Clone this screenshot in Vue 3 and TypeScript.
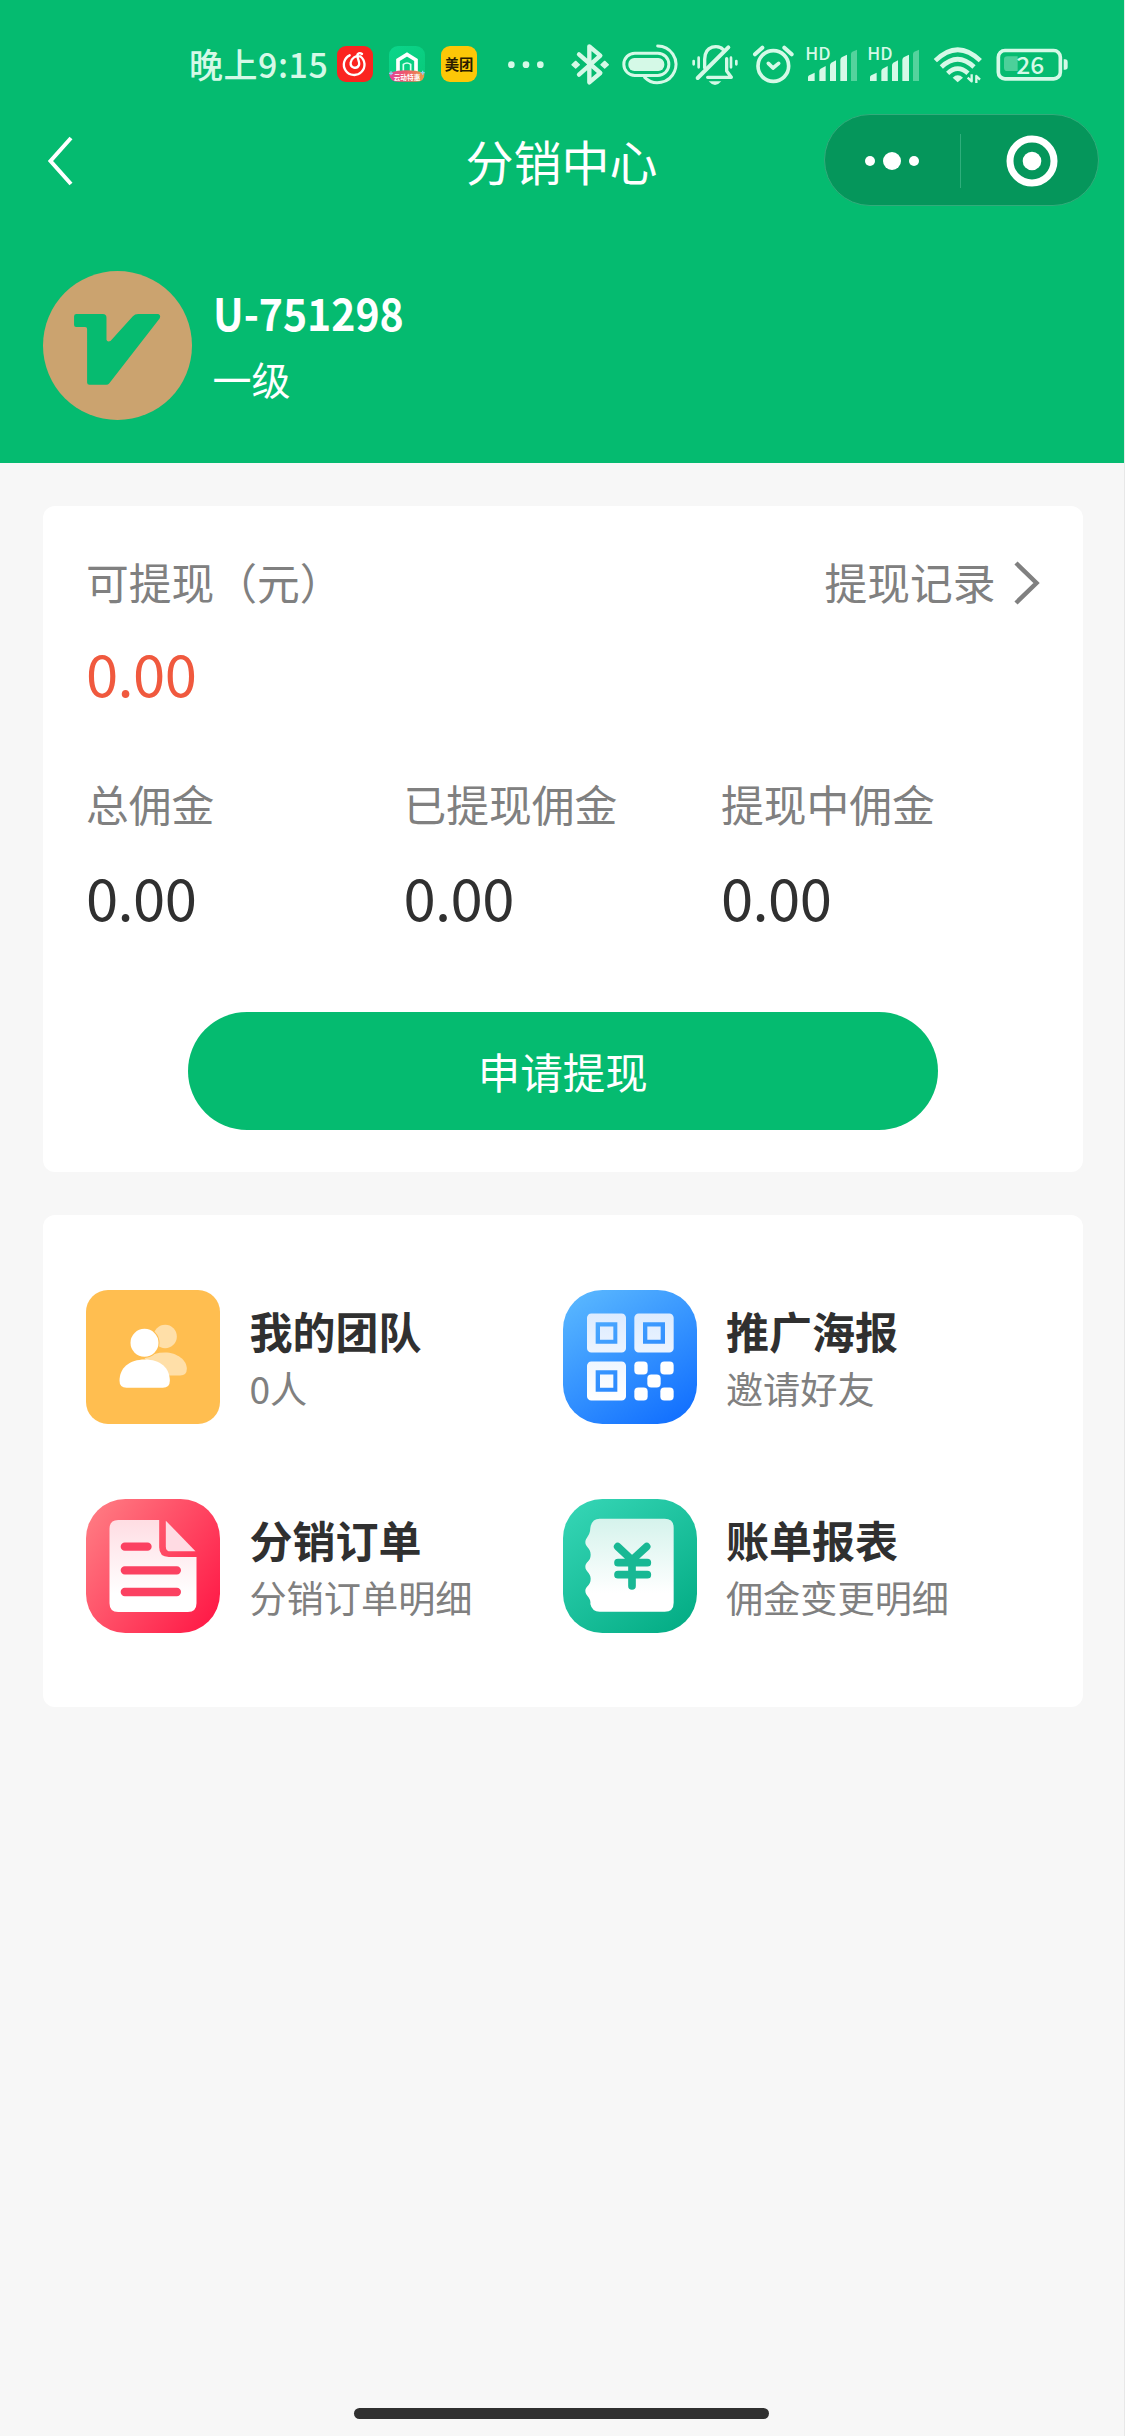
<script setup lang="ts">
interface Stat {
  label: string
  value: string
}
interface Entry {
  icon: 'team' | 'poster' | 'order' | 'bill'
  title: string
  desc: string
}

const stats: Stat[] = [
  { label: '总佣金', value: '0.00' },
  { label: '已提现佣金', value: '0.00' },
  { label: '提现中佣金', value: '0.00' },
]

const entries: Entry[] = [
  { icon: 'team', title: '我的团队', desc: '0人' },
  { icon: 'poster', title: '推广海报', desc: '邀请好友' },
  { icon: 'order', title: '分销订单', desc: '分销订单明细' },
  { icon: 'bill', title: '账单报表', desc: '佣金变更明细' },
]

const signals: string[] = ['sim1', 'sim2']
</script>

<template>
  <div class="page">
    <header class="header">
      <div class="status">
        <span class="clock">晚上9:15</span>
        <svg class="app" viewBox="0 0 108 108">
          <rect width="108" height="108" rx="27" fill="#fb2420" />
          <path d="M38 28A31 31 0 1 0 70 31C56 28 43 36 41 50C39 66 60 71 66 57C69 50 62 38 61 31C60 21 69 19 75 24" fill="none" stroke="#fff" stroke-width="7" stroke-linecap="round" />
        </svg>
        <svg class="app" viewBox="0 0 108 108">
          <defs>
            <linearGradient id="homeBg" x1="0" y1="0" x2="1" y2="1">
              <stop offset="0" stop-color="#0bd68b" />
              <stop offset="1" stop-color="#08c97a" />
            </linearGradient>
            <linearGradient id="ribbon" x1="0" x2="1">
              <stop offset="0" stop-color="#e0439a" />
              <stop offset=".5" stop-color="#ef5a68" />
              <stop offset="1" stop-color="#e6a04a" />
            </linearGradient>
          </defs>
          <rect width="108" height="108" rx="27" fill="url(#homeBg)" />
          <path d="M27 78V42L54 25L81 42V78" fill="none" stroke="#fff" stroke-width="11" />
          <path d="M43 78V55Q54 47 65 55V78" fill="none" stroke="#d9fff0" stroke-width="5" />
          <path d="M0 80Q54 66 106 80Q108 108 80 107H28Q2 108 0 80Z" fill="url(#ribbon)" />
          <path d="M0 82H12M95 80H107M6 76V88M101 74V86" stroke="#8fd0f5" stroke-width="4" />
          <text x="54" y="101" text-anchor="middle" font-size="20" font-weight="700" fill="#fff">云动特惠</text>
        </svg>
        <svg class="app" viewBox="0 0 108 108">
          <rect width="108" height="108" rx="27" fill="#fdc707" />
          <text x="54" y="71" text-anchor="middle" font-size="43" font-weight="700" fill="#2b1d00">美团</text>
        </svg>
        <svg class="dots" viewBox="50 36 114 132">
          <g fill="#d5f9e7"><circle cx="63" cy="104" r="10" /><circle cx="107" cy="104" r="10" /><circle cx="150" cy="104" r="10" /></g>
        </svg>
        <svg class="bt" viewBox="243 36 114 132">
          <path d="M267 73L331 129L298 157V49L331 77L267 134" fill="none" stroke="#d5f9e7" stroke-width="13" stroke-linejoin="round" stroke-linecap="round" />
          <path d="M246 104L257 94L268 104L257 114ZM333 104L344 94L355 104L344 114Z" fill="#d5f9e7" stroke="#d5f9e7" stroke-width="4" stroke-linejoin="round" />
        </svg>
        <svg class="pill" viewBox="396 36 168 132">
          <g fill="none" stroke="#d5f9e7" stroke-width="9" stroke-linecap="round">
            <rect x="401.500" y="69.500" width="135" height="67" rx="33" />
            <path d="M503 48A55 55 0 1 1 464 142" />
          </g>
          <rect x="415" y="84" width="108" height="39" rx="18" fill="#d5f9e7" />
        </svg>
        <svg class="bell" viewBox="603 36 144 132">
          <g fill="none" stroke="#d5f9e7" stroke-width="10" stroke-linecap="round">
            <path d="M644 113V88C644 46 685 42 701 60" />
            <path d="M715 52L623 144" stroke-width="12" />
            <path d="M653 142H724L710 123V86" stroke-linejoin="round" />
            <path d="M611 93V103M626 83V112M723 83V112M739 93V103" stroke-width="8" />
          </g>
          <path d="M656 154H694Q675 176 656 154Z" fill="#d5f9e7" />
        </svg>
        <svg class="alarm" viewBox="787 36 129 132">
          <g fill="none" stroke="#d5f9e7" stroke-width="11" stroke-linecap="round" stroke-linejoin="round">
            <circle cx="851" cy="108" r="46" />
            <path d="M836 100L850 114L867 100" />
            <path d="M796 73L818 53M884 53L906 73" stroke-width="12" />
          </g>
        </svg>
        <svg v-for="s in signals" :key="s" class="signal" viewBox="75 36 162 132">
          <text x="76" y="91" font-size="50" font-weight="500" fill="#d5f9e7" textLength="76" lengthAdjust="spacingAndGlyphs">HD</text>
          <g fill="#d5f9e7">
            <path d="M84 153V142Q84 138 88 136L104 128V153Z" />
            <path d="M118 153V123Q118 119 122 116L137 108V153Z" />
            <path d="M150 153V106Q150 101 154 98L168 91V153Z" />
            <path d="M181 153V90Q181 85 185 82L201 74V153Z" />
            <path d="M213 153V72Q213 67 217 65L231 59V153Z" opacity=".38" />
          </g>
        </svg>
        <svg class="wifi" viewBox="458 36 147 132">
          <g fill="none" stroke="#d5f9e7" stroke-width="14">
            <path d="M465 92Q532 26 600 92" />
            <path d="M483 111Q532 64 581 111" />
            <path d="M502 130Q532 102 563 130" />
          </g>
          <path d="M517 143Q532 129 548 143L532 157Z" fill="#d5f9e7" />
          <path d="M574 133V154L562 143M588 159V138L599 149" fill="none" stroke="#d5f9e7" stroke-width="7" stroke-linejoin="round" />
        </svg>
        <svg class="battery" viewBox="648 36 219 132">
          <rect x="655" y="61.500" width="186" height="85" rx="20" fill="none" stroke="#d5f9e7" stroke-width="11" />
          <path d="M682 79H713V123H682Q672 123 672 113V89Q672 79 682 79Z" fill="#d5f9e7" opacity=".35" />
          <path d="M851 88H855Q863 88 863 96V111Q863 119 855 119H851Z" fill="#d5f9e7" />
          <text x="751" y="131" text-anchor="middle" font-size="70" font-weight="500" fill="#d5f9e7" textLength="84" lengthAdjust="spacingAndGlyphs">26</text>
        </svg>
      </div>

      <nav class="nav">
        <svg class="back" viewBox="0 0 30 52"><path d="M26 3L5.500 26L26 49" fill="none" stroke="#fff" stroke-width="4" /></svg>
        <h1 class="title">分销中心</h1>
        <div class="capsule">
          <svg class="more" viewBox="0 0 56 20"><circle cx="6" cy="10" r="5" fill="#fff" /><circle cx="28" cy="10" r="9" fill="#fff" /><circle cx="50" cy="10" r="5" fill="#fff" /></svg>
          <i class="split"></i>
          <svg class="target" viewBox="0 0 52 52"><circle cx="26" cy="26" r="22" fill="none" stroke="#fff" stroke-width="7" /><circle cx="26" cy="26" r="9.300" fill="#fff" /></svg>
        </div>
      </nav>

      <section class="profile">
        <svg class="avatar" viewBox="129 92.5 446 446">
          <circle cx="352" cy="315.500" r="223" fill="#cba36f" />
          <path d="M229 221H308Q319 221 319 232V298Q321 306 331 302L398 228Q404 221 414 221H474Q483 224 478 235L327 429Q324 433 318 433H268Q261 433 261 426V266Q261 260 255 260H228Q222 260 222 254V228Q222 221 229 221Z" fill="#06bb70" />
        </svg>
        <div class="who">
          <div class="name">U-751298</div>
          <div class="level">一级</div>
        </div>
      </section>
    </header>

    <main class="body">
      <section class="card wallet">
        <div class="row">
          <span class="label">可提现（元）</span>
          <a class="record">
            <span class="label">提现记录</span>
            <svg class="arrow" viewBox="0 0 28 44"><path d="M3 2L23.500 22L3 42" fill="none" stroke="#808080" stroke-width="4.500" /></svg>
          </a>
        </div>
        <div class="amount available">0.00</div>
        <div class="stats">
          <div v-for="s in stats" :key="s.label" class="stat">
            <div class="label">{{ s.label }}</div>
            <div class="amount">{{ s.value }}</div>
          </div>
        </div>
        <button class="apply">申请提现</button>
      </section>

      <section class="card menu">
        <div v-for="e in entries" :key="e.icon" class="entry">
          <svg v-if="e.icon === 'team'" class="icon" viewBox="79.5 89.5 402 402">
            <rect x="79.500" y="89.500" width="402" height="402" rx="66" fill="#ffbe50" />
            <g fill="#ffdfa8">
              <circle cx="317" cy="229" r="35" />
              <path d="M255 294Q285 277 316 277C353 277 382 300 382 326Q382 346 362 346H300Z" />
            </g>
            <circle cx="255" cy="248" r="45" fill="#ffbe50" />
            <circle cx="255" cy="248" r="42" fill="#fff" />
            <path d="M180 362C180 323 210 298 256 298C302 298 331 323 331 362Q331 383 310 383H201Q180 383 180 362Z" fill="#fff" />
          </svg>
          <svg v-else-if="e.icon === 'poster'" class="icon" viewBox="69 89.5 402 402">
            <defs>
              <linearGradient id="blue" x1=".1" y1="0" x2=".75" y2="1">
                <stop offset="0" stop-color="#5ab8ff" />
                <stop offset="1" stop-color="#1472ff" />
              </linearGradient>
              <linearGradient id="blueInk" gradientUnits="userSpaceOnUse" x1="0" y1="160" x2="0" y2="420">
                <stop offset="0" stop-color="#dcebff" />
                <stop offset="1" stop-color="#fff" />
              </linearGradient>
            </defs>
            <rect x="69" y="89.500" width="402" height="402" rx="118" fill="url(#blue)" />
            <g fill="none" stroke="url(#blueInk)" stroke-width="26" stroke-linejoin="round">
              <path d="M154 173H245V264H154ZM296 173H388V264H296ZM154 317H245V408H154Z" />
            </g>
            <path d="M180 199H220V239H180ZM322 199H362V239H322ZM180 343H220V383H180Z" fill="url(#blueInk)" />
            <g fill="#fff">
              <rect x="283" y="304" width="40" height="39" rx="12" /><rect x="361" y="304" width="40" height="39" rx="12" />
              <rect x="322" y="343" width="40" height="39" rx="12" />
              <rect x="283" y="382" width="40" height="39" rx="12" /><rect x="361" y="382" width="40" height="39" rx="12" />
            </g>
          </svg>
          <svg v-else-if="e.icon === 'order'" class="icon" viewBox="79.5 717 402 402">
            <defs>
              <linearGradient id="red" x1="0" y1=".1" x2="1" y2=".8">
                <stop offset="0" stop-color="#ff7c83" />
                <stop offset="1" stop-color="#ff1c48" />
              </linearGradient>
              <linearGradient id="redInk" x1="0" y1="0" x2="0" y2="1">
                <stop offset="0" stop-color="#ffdde3" />
                <stop offset=".8" stop-color="#fff" />
              </linearGradient>
            </defs>
            <rect x="79.500" y="717" width="402" height="402" rx="118" fill="url(#red)" />
            <path d="M176 780H299V862Q299 891 328 891H411V1030Q411 1056 385 1056H176Q150 1056 150 1030V806Q150 780 176 780Z" fill="url(#redInk)" />
            <path d="M319 782L408 874H333Q319 874 319 860Z" fill="#ffdbe3" />
            <path d="M196 860H264M196 931H352M196 996H352" stroke="#fb4161" stroke-width="25" stroke-linecap="round" />
          </svg>
          <svg v-else class="icon" viewBox="69 717 402 402">
            <defs>
              <linearGradient id="teal" x1=".1" y1="0" x2=".85" y2="1">
                <stop offset="0" stop-color="#35d5b5" />
                <stop offset="1" stop-color="#04ad85" />
              </linearGradient>
              <linearGradient id="tealInk" x1="0" y1="0" x2="0" y2="1">
                <stop offset="0" stop-color="#d5f3ec" />
                <stop offset=".8" stop-color="#fff" />
              </linearGradient>
            </defs>
            <rect x="69" y="717" width="402" height="402" rx="118" fill="url(#teal)" />
            <path d="M179 776H374Q401 776 401 803V1028Q401 1055 374 1055H179Q156 1055 151 1032C154 1012 136 1008 136 992C136 978 152 978 152 956C152 937 136 935 136 920C136 905 152 905 152 884C152 864 136 862 136 847C136 832 150 830 151 804Q155 776 179 776Z" fill="url(#tealInk)" />
            <path d="M233 860L276 900L320 860M276 900V978M234 908H322M234 944H322" fill="none" stroke="#18b894" stroke-width="23" stroke-linecap="round" />
          </svg>
          <div class="text">
            <div class="entry-title">{{ e.title }}</div>
            <div class="entry-desc">{{ e.desc }}</div>
          </div>
        </div>
      </section>
    </main>

    <div class="home-bar"></div>
  </div>
</template>

<style>
body {
  background: #f7f7f7;
}
</style>

<style scoped>
.page {
  box-sizing: border-box;
  display: flex;
  flex-direction: column;
  width: 1125px;
  height: 2436px;
  overflow: hidden;
  background: #f7f7f7;
  border-right: 1px solid #e8e8e8;
  font-family: 'Noto Sans CJK SC', 'Noto Sans', sans-serif;
}
svg {
  display: block;
  flex: none;
}
.header {
  box-sizing: border-box;
  width: 1124px;
  height: 463px;
  padding-top: 42px;
  background: #05bb70;
}
.status {
  display: flex;
  align-items: center;
  height: 44px;
  padding-left: 189px;
}
.clock {
  width: 148px;
  flex: none;
  font-size: 34px;
  line-height: 44px;
  font-weight: 500;
  letter-spacing: 0.5px;
  white-space: nowrap;
  color: #d5f9e7;
}
.app {
  width: 36px;
  height: 36px;
  margin-right: 16px;
}
.dots { width: 38px; height: 44px; margin-left: 13.7px; }
.bt { width: 38px; height: 44px; margin-left: 26.3px; }
.pill { width: 56px; height: 44px; margin-left: 13px; }
.bell { width: 48px; height: 44px; margin-left: 13px; }
.alarm { width: 43px; height: 44px; margin-left: 13.3px; }
.signal { width: 54px; height: 44px; margin-left: 9.7px; }
.signal + .signal { margin-left: 8px; }
.wifi { width: 49px; height: 44px; margin-left: 11.7px; }
.battery { width: 73px; height: 44px; margin-left: 14.3px; }

.nav {
  display: grid;
  grid-template-columns: 1fr auto 1fr;
  align-items: center;
  height: 92px;
  margin-top: 28px;
}
.back {
  width: 30px;
  height: 52px;
  margin: 1px 0 0 44.5px;
}
.title {
  margin: 0 1px 0 0;
  font-size: 48px;
  line-height: 60px;
  font-weight: 400;
  color: #fff;
}
.capsule {
  box-sizing: border-box;
  justify-self: end;
  display: flex;
  align-items: center;
  width: 275px;
  height: 92px;
  margin-right: 25.5px;
  padding: 2px 0 0 39.5px;
  border: 1px solid #32ac7b;
  border-radius: 46px;
  background: #05965b;
}
.more { width: 56px; height: 20px; }
.split { width: 1px; height: 54px; margin-left: 40px; background: #2fae7c; }
.target { width: 52px; height: 52px; margin-left: 45px; }

.profile {
  display: flex;
  align-items: center;
  height: 149px;
  margin: 64.5px 0 0 43px;
}
.avatar {
  width: 149px;
  height: 149px;
}
.who {
  margin-left: 20.5px;
  color: #fff;
}
.name {
  font-size: 45px;
  line-height: 66px;
  font-weight: 700;
  transform: scaleX(0.91);
  transform-origin: left center;
}
.level {
  font-size: 39px;
  line-height: 66px;
}

.body {
  display: flex;
  flex-direction: column;
  gap: 42.5px;
  padding: 42.5px 41.5px 0 43px;
}
.card {
  box-sizing: border-box;
  border-radius: 12px;
  background: #fff;
}
.wallet {
  height: 666.5px;
  padding: 45px 43px 0;
}
.row {
  display: flex;
  align-items: center;
  justify-content: space-between;
  height: 60px;
}
.record {
  display: flex;
  align-items: center;
  margin-right: -1px;
}
.arrow {
  width: 28px;
  height: 44px;
  margin: 5px 0 0 17px;
}
.label {
  font-size: 42.75px;
  line-height: 60px;
  color: #808080;
  white-space: nowrap;
}
.amount {
  font-size: 58px;
  line-height: 80px;
  letter-spacing: -0.6px;
  color: #303030;
}
.available {
  margin-top: 21px;
  color: #f0593e;
}
.stats {
  display: grid;
  grid-template-columns: repeat(3, 317.5px);
  margin-top: 61px;
}
.stat .amount {
  margin-top: 23px;
}
.apply {
  display: block;
  width: 750px;
  height: 118px;
  margin: 76px auto 0;
  padding: 0;
  border: 0;
  border-radius: 59px;
  background: #05bb70;
  color: #fff;
  font-family: inherit;
  font-size: 42.5px;
}
.menu {
  display: grid;
  grid-template-columns: 476.5px 1fr;
  grid-auto-rows: 134px;
  row-gap: 75.3px;
  height: 492.5px;
  padding: 75px 0 0 43.4px;
}
.entry {
  display: flex;
}
.icon {
  width: 134px;
  height: 134px;
}
.text {
  margin-left: 29px;
  padding-top: 10px;
  white-space: nowrap;
}
.entry-title {
  font-size: 43px;
  line-height: 60px;
  font-weight: 700;
  color: #303030;
}
.entry-desc {
  font-size: 37.2px;
  line-height: 56px;
  color: #808080;
}
.home-bar {
  width: 415px;
  height: 10.5px;
  margin: auto 0 17.5px 354px;
  border-radius: 6px;
  background: #303030;
}
</style>
